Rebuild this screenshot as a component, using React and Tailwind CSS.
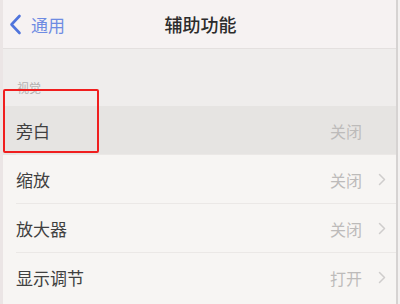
import React from "react";

const font = { fontFamily: '"Noto Sans CJK SC", "Noto Sans", sans-serif' };

function Chevron() {
  return (
    <svg width="8" height="13" viewBox="0 0 8 13" className="ml-[16px]">
      <path d="M1.5 1.5 L6.5 6.5 L1.5 11.5" fill="none" stroke="#cfcdcc" strokeWidth="1.5" strokeLinecap="round" strokeLinejoin="round" />
    </svg>
  );
}

function Row({ label, value, highlighted, chevron = true, last }) {
  return (
    <div className={`relative flex h-[49px] items-center pl-[13px] pr-[10px] ${highlighted ? "bg-[#e6e4e2]" : "bg-[#f7f5f3]"}`}>
      <span className="text-[17px] text-[#404040]">{label}</span>
      <div className="ml-auto flex items-center">
        <span className="text-[16px] text-[#bdbbba]">{value}</span>
        {chevron ? <Chevron /> : <span className="ml-[16px] w-2" />}
      </div>
      {!last && <div className="absolute bottom-0 left-[13px] right-0 h-px bg-[#ebe8e6]" />}
    </div>
  );
}

export default function App() {
  return (
    <div className="flex h-[304px] w-[400px] overflow-hidden bg-[#f4f1f0]" style={font}>
      <div className="w-[3px] bg-[#ebe5e5]" />
      <div className="relative flex w-[393px] flex-col">
        <div className="relative flex h-[49px] items-center border-b border-[#e4e0df] bg-[#f6f2f2]">
          <div className="flex items-center pl-[6px] pt-[1px]">
            <svg width="13" height="21" viewBox="0 0 13 21">
              <path d="M10.5 2 L2.5 10.5 L10.5 19" fill="none" stroke="#4f74dc" strokeWidth="2.6" strokeLinecap="round" strokeLinejoin="round" />
            </svg>
            <span className="ml-[9px] text-[17px] text-[#6e8be2]">通用</span>
          </div>
          <div className="absolute inset-x-0 top-0 flex h-full items-center justify-center pl-[2px]">
            <span className="text-[18px] font-medium text-[#2c2b2b]">辅助功能</span>
          </div>
        </div>
        <div className="flex h-[57px] items-end bg-[#efedec] pb-[9px] pl-[14px]">
          <span className="text-[12px] text-[#b4b1b0]">视觉</span>
        </div>
        <Row label="旁白" value="关闭" highlighted chevron={false} />
        <Row label="缩放" value="关闭" />
        <Row label="放大器" value="关闭" />
        <Row label="显示调节" value="打开" last />
        <div className="flex-1 bg-[#f7f5f3]" />
        <div className="absolute left-0 top-[89px] h-[64px] w-[96px] rounded-[2px] border-2 border-[#f01e1e]" />
      </div>
      <div className="w-[2px] bg-[#d6d3d2]" />
      <div className="w-[2px] bg-[#f3f1f0]" />
    </div>
  );
}
